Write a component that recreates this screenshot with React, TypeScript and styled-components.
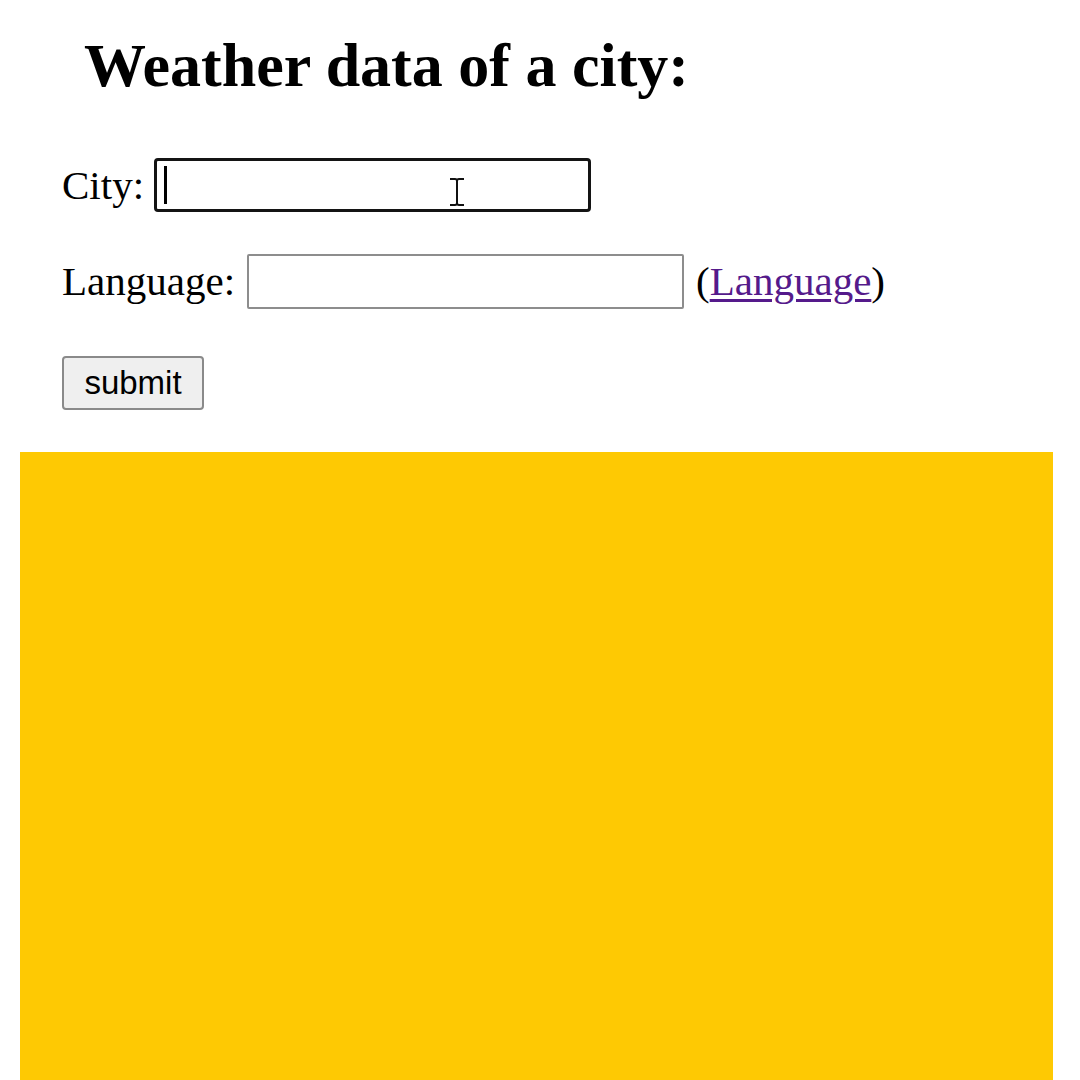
import React from "react";
import styled, { createGlobalStyle } from "styled-components";

const Global = createGlobalStyle`
  html, body { margin: 0; padding: 0; background: #ffffff; }
  body { font-family: "Liberation Serif", "Times New Roman", serif; color: #000; overflow: hidden; }
`;

const Page = styled.div`
  width: 1080px;
  height: 1080px;
  overflow: hidden;
  display: flex;
  flex-direction: column;
`;

const FormArea = styled.form`
  display: flex;
  flex-direction: column;
  padding: 34px 0 0 62px;
`;

const Title = styled.h1`
  margin: 0 0 62px 22px;
  font-size: 62px;
  line-height: 1;
  font-weight: bold;
`;

const Row = styled.div<{ $gap: number; $space?: number }>`
  display: flex;
  align-items: center;
  gap: ${(p) => p.$space ?? 12}px;
  margin-bottom: ${(p) => p.$gap}px;
`;

const Label = styled.label`
  font-size: 41px;
  line-height: 1;
`;

const FieldWrap = styled.div`
  position: relative;
  display: flex;
`;

const TextField = styled.input<{ $focused?: boolean }>`
  box-sizing: border-box;
  width: 437px;
  height: ${(p) => (p.$focused ? 54 : 55)}px;
  border: ${(p) => (p.$focused ? "3px solid #141414" : "2px solid #8d8d8d")};
  border-radius: ${(p) => (p.$focused ? 4 : 2)}px;
  background: #fff;
  outline: none;
  padding: 0 8px;
  font-size: 30px;
  font-family: "Liberation Sans", Arial, sans-serif;
`;

const Caret = styled.span`
  position: absolute;
  left: 10px;
  top: 8px;
  width: 3px;
  height: 38px;
  background: #000;
`;

const IBeam = styled.svg`
  position: absolute;
  left: 293px;
  top: 19px;
`;

const Aside = styled.span`
  font-size: 41px;
  line-height: 1;
`;

const LangLink = styled.a`
  color: #551a8b;
  text-decoration: underline;
  text-decoration-thickness: 3px;
  text-underline-offset: 4px;
`;

const SubmitButton = styled.button`
  box-sizing: border-box;
  width: 142px;
  height: 54px;
  padding: 0;
  background: #efefef;
  border: 2px solid #8a8a8a;
  border-radius: 4px;
  font-family: "Liberation Sans", Arial, sans-serif;
  font-size: 33px;
  color: #000;
  margin-bottom: 42px;
`;

const Panel = styled.div`
  margin-left: 20px;
  width: 1033px;
  flex: 1;
  background: #fec903;
`;

export default function App() {
  return (
    <Page>
      <Global />
      <FormArea onSubmit={(e) => e.preventDefault()}>
        <Title>Weather data of a city:</Title>
        <Row $gap={42} $space={10}>
          <Label htmlFor="city">City:</Label>
          <FieldWrap>
            <TextField id="city" $focused />
            <Caret />
            <IBeam width="20" height="30" viewBox="0 0 20 30">
              <path
                d="M3 2 H8 Q10 2 10 4 V26 Q10 28 8 28 H3 M17 2 H12 Q10 2 10 4 M10 26 Q10 28 12 28 H17"
                fill="none"
                stroke="#111"
                strokeWidth="2"
              />
            </IBeam>
          </FieldWrap>
        </Row>
        <Row $gap={47}>
          <Label htmlFor="lang">Language:</Label>
          <TextField id="lang" />
          <Aside>
            (<LangLink href="#">Language</LangLink>)
          </Aside>
        </Row>
        <div>
          <SubmitButton type="submit">submit</SubmitButton>
        </div>
      </FormArea>
      <Panel />
    </Page>
  );
}
